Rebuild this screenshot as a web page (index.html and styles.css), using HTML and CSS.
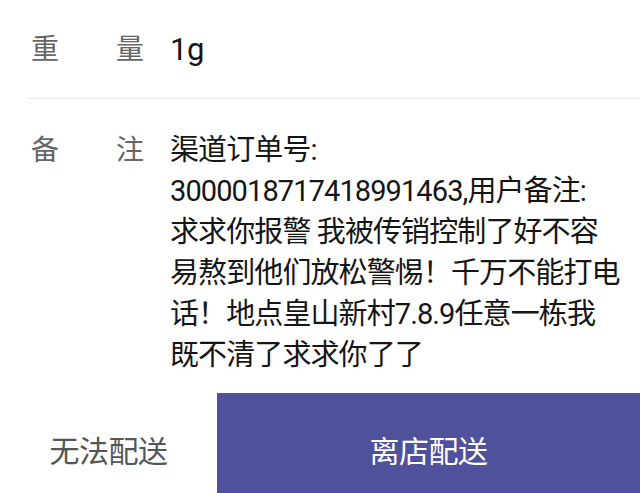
FILE: index.html
```html
<!DOCTYPE html>
<html lang="zh-CN">
<head>
<meta charset="utf-8">
<title>订单详情</title>
<link rel="stylesheet" href="styles.css">
</head>
<body>
<div class="page">
  <div class="row row-weight">
    <div class="label"><span>重</span><span>量</span></div>
    <div class="value value-weight">1g</div>
  </div>
  <div class="row row-remark">
    <div class="label"><span>备</span><span>注</span></div>
    <div class="value remark">渠道订单号:<br>3000018717418991463,用户备注:<br>求求你报警 我被传销控制了好不容<br>易熬到他们放松警惕！千万不能打电<br>话！地点皇山新村7.8.9任意一栋我<br>既不清了求求你了了</div>
  </div>
  <div class="actions">
    <button class="btn btn-secondary">无法配送</button>
    <button class="btn btn-primary">离店配送</button>
  </div>
</div>
</body>
</html>
```
FILE: styles.css
```css
html, body {
  margin: 0;
  padding: 0;
  background: #ffffff;
  overflow: hidden;
}

body {
  font-family: Roboto, "Noto Sans CJK SC", "Noto Sans", sans-serif;
  color: #151515;
}

.page {
  width: 640px;
  height: 493px;
  overflow: hidden;
}

.row {
  display: flex;
  margin-left: 28px;
}

.label {
  display: flex;
  justify-content: space-between;
  width: 113px;
  margin-left: 3px;
  margin-right: 26px;
  font-size: 28px;
  line-height: 41px;
  color: #666666;
  flex: none;
}

.value {
  font-size: 29px;
  letter-spacing: -0.9px;
  line-height: 41px;
  color: #151515;
  white-space: nowrap;
}

.value-weight {
  font-size: 31px;
  letter-spacing: -0.5px;
}

.row-weight {
  height: 98px;
  align-items: center;
  border-bottom: 1px solid #e8e8e8;
}

.row-remark {
  padding-top: 31px;
  align-items: flex-start;
}

.actions {
  display: flex;
  margin-top: 17px;
  height: 112px;
}

.btn {
  border: none;
  margin: 0;
  padding: 0;
  font-family: "Noto Sans CJK SC", Roboto, sans-serif;
  font-size: 30px;
  letter-spacing: -0.5px;
  line-height: 112px;
  text-align: center;
  cursor: pointer;
}

.btn-secondary {
  width: 217px;
  flex: none;
  background: #ffffff;
  color: #555555;
}

.btn-primary {
  flex: 1;
  background: #4f519b;
  color: #ffffff;
}
```
